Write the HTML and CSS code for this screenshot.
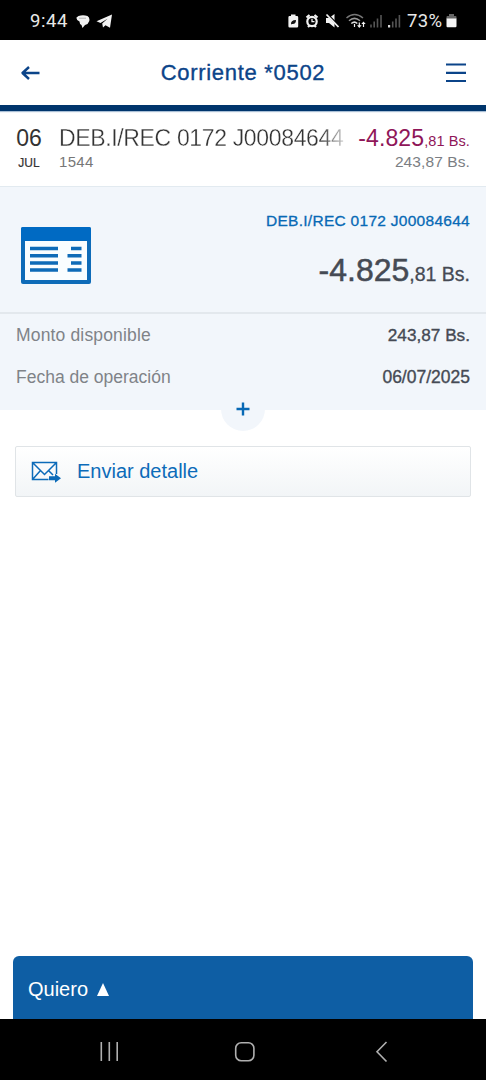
FILE: index.html
```html
<!DOCTYPE html>
<html lang="es">
<head>
<meta charset="utf-8">
<title>Corriente *0502</title>
<link rel="stylesheet" href="styles.css">
</head>
<body>
<div class="screen">
  <div class="status">
    <div class="status-left">
      <span class="clock">9:44</span>
      <svg class="ico-chat" width="14" height="14" viewBox="0 0 14 14"><path d="M2.500 1Q7-.5 11.500 1 14 2.500 13.300 6 12.500 9 9 10L6.500 13 5.500 10Q3.500 9.500 3.500 6.500 0 5 .5 2.500Z" fill="#f2f2f2"/><path d="M3 3.200H10" stroke="#999" stroke-width=".7"/></svg>
      <svg class="ico-plane" width="17" height="15" viewBox="0 0 17 15"><path d="M16 .5 14 13.800 9.500 11.300 7 13.500 6.200 9.500 11.500 4.800 4.500 9 .5 7.200Z" fill="#f2f2f2"/></svg>
    </div>
    <div class="status-right">
      <svg width="118" height="18" viewBox="287 13 118 18">
        <path d="M290 14.500h4.500v1.500h1.500q1.200 0 1.200 1.200v9q0 1.300-1.200 1.300h-7.400q-1.200 0-1.200-1.300v-9q0-1.200 1.200-1.200h1.400z" fill="#f2f2f2"/>
        <path d="M290 24.500q-.5-4.500 5-4.500 0 4.500-4 4" fill="#111"/>
        <circle cx="311" cy="21.500" r="4.700" fill="none" stroke="#f2f2f2" stroke-width="2.200"/>
        <path d="M305.500 17.500l3-2.500M316.500 17.500l-3-2.500M307 27l1.500-1.500M315 27l-1.500-1.500" stroke="#f2f2f2" stroke-width="2.200"/>
        <path d="M311 18.700v3h2.500" fill="none" stroke="#f2f2f2" stroke-width="1.300"/>
        <path d="M325 18h3l5.500-4v13.500l-5.500-4.500h-3z" fill="#f2f2f2"/>
        <path d="M326.500 14.500l12 12.500" stroke="#000" stroke-width="2.500"/>
        <path d="M325.500 14.500l12 12.500" stroke="#f2f2f2" stroke-width="1.800"/>
        <g fill="none" stroke-width="1.500">
          <path d="M345.500 18q8-7 16.500 0" stroke="#777"/>
          <path d="M348 20.800q5.500-4.800 11 0" stroke="#999"/>
          <path d="M350.300 23.500q3.200-2.700 6 0" stroke="#ddd"/>
        </g>
        <path d="M353.500 24v3M358.300 22.500v4M362.500 27v-4" stroke="#f2f2f2" stroke-width="1.200"/>
        <path d="M356 25.200h4.600L358.300 28zM360.300 24h4.400L362.500 21.400z" fill="#f2f2f2"/>
        <g stroke="#555" stroke-width="1.600"><path d="M370 27.500v-3M373.200 27.500v-6M376.500 27.500v-9M380 27.500V15M391.700 27.500v-6M395 27.500v-9M398.400 27.500V15"/></g>
        <path d="M387 25v2.500h2.200V25z" fill="#ddd"/>
      </svg>
      <span class="percent">73%</span>
      <svg class="ico-batt" width="11" height="14" viewBox="0 0 11 14"><path d="M3 0h5v2h1.500q1 0 1 1v2H.5V3q0-1 1-1H3z" fill="#666"/><path d="M.5 4.500h10v7.500q0 1.300-1 1.300h-8q-1 0-1-1.300z" fill="#f5f5f5"/></svg>
    </div>
  </div>

  <header class="topbar">
    <svg width="20" height="16" viewBox="0 0 20 16"><path d="M19.500 8H3M9 2 2.500 8 9 14" fill="none" stroke="#0b4489" stroke-width="2.400" stroke-linejoin="round"/></svg>
    <h1 class="title">Corriente *0502</h1>
    <svg width="20" height="20" viewBox="0 0 20 20"><path d="M0 1.500H20M0 9.800H20M0 18H20" stroke="#0b4489" stroke-width="2.200"/></svg>
  </header>

  <section class="movement">
    <div class="date"><span class="day">06</span><span class="month">JUL</span></div>
    <div class="concept"><span class="concept-name">DEB.I/REC 0172 J00084644</span><span class="ref">1544</span></div>
    <div class="amounts">
      <span class="debit">-4.825<span class="debit-cents">,81 Bs.</span></span>
      <span class="balance">243,87 Bs.</span>
    </div>
  </section>

  <section class="summary">
    <svg class="doc" width="70" height="57" viewBox="0 0 70 57"><rect width="70" height="57" rx="2" fill="#0e6bb8"/><rect width="70" height="14" rx="2" fill="#006ac3"/><path d="M4 14H66V53H4z" fill="#f9fdff"/><path d="M9 21.500H37M9 28.800H37M9 36H37M9 43H37M50 21.500H60.500M46.500 28.800H60.500M50 36H60.500M46.500 43H60.500" stroke="#0e6bb8" stroke-width="3.400"/></svg>
    <div class="summary-text">
      <span class="summary-name">DEB.I/REC 0172 J00084644</span>
      <span class="summary-amount">-4.825<span class="summary-cents">,81 Bs.</span></span>
    </div>
  </section>

  <section class="details">
    <div class="line"><span class="label label-amount">Monto disponible</span><span class="value value-money">243,87 Bs.</span></div>
    <div class="line"><span class="label">Fecha de operación</span><span class="value">06/07/2025</span></div>
    <div class="more"><svg width="14" height="14" viewBox="0 0 14 14"><path d="M.5 7H13.500M7 .5V13.500" stroke="#0869b5" stroke-width="2.400"/></svg></div>
  </section>

  <div class="send">
    <svg width="31" height="22" viewBox="0 0 31 22"><g fill="none" stroke="#0c6bb9" stroke-width="1.500"><path d="M17.500 18.600H1.500V1.500H25.500V13M1.500 1.500 13.500 13.500 25.500 1.500M1.500 18.600 9.500 9.500M17.500 9.500 22 14"/></g><path d="M18 15.200H24V12.800L30 17.300 24 21.700V19.200H18z" fill="#0c6bb9"/></svg>
    <span>Enviar detalle</span>
  </div>

  <div class="space"></div>

  <div class="quiero"><span>Quiero</span><svg width="12" height="13" viewBox="0 0 12 13"><path d="M6 0 12 13H0z" fill="#fff"/></svg></div>

  <nav class="navbar">
    <svg width="486" height="61" viewBox="0 1019 486 61"><g fill="none" stroke="#b0b0b0" stroke-width="1.600"><path d="M101.300 1042V1061M109.300 1042V1061M117.200 1042V1061"/><rect x="235.700" y="1042.700" width="18.200" height="18" rx="5.500"/><path d="M386.500 1042 377 1051.700 386.500 1061.500"/></g></svg>
  </nav>
</div>
</body>
</html>
```
FILE: styles.css
```css
* { box-sizing: border-box; }
body {
  margin: 0;
  background: #fff;
  font-family: "Liberation Sans", Arial, sans-serif;
}
.screen {
  display: flex;
  flex-direction: column;
  width: 486px;
  height: 1080px;
  overflow: hidden;
}
.screen span, .screen h1 { white-space: nowrap; }
svg { display: block; flex: none; }

.status {
  display: flex;
  justify-content: space-between;
  height: 40px;
  padding: 0 29px 0 30px;
  background: #000;
  color: #e8e8e8;
  font-family: Roboto, sans-serif;
  font-size: 18.5px;
  line-height: 43px;
}
.status-left, .status-right { display: flex; }
.clock { width: 46px; letter-spacing: 0.6px; }
.ico-chat { margin-top: 15px; }
.ico-plane { margin: 14px 0 0 6px; }
.status-right > svg:first-child { margin-top: 13px; }
.percent { width: 39px; margin-left: 1px; letter-spacing: 0.3px; }
.ico-batt { margin-top: 14px; }

.topbar {
  display: flex;
  align-items: center;
  justify-content: space-between;
  height: 71px;
  padding: 0 20px;
  border-bottom: 6px solid #00356c;
  box-shadow: 0 1px 1px #a9bfd5;
  color: #0b4489;
}
.title {
  margin: 0;
  font-size: 22px;
  font-weight: 400;
  letter-spacing: 0.7px;
  -webkit-text-stroke: 0.35px #0b4489;
}

.movement {
  display: flex;
  height: 76px;
  padding: 14px 16px 0 15px;
  border-bottom: 1px solid #e2eaf0;
  color: #333;
}
.movement > div { display: flex; flex-direction: column; }
.date { width: 28px; align-items: center; }
.day { font-size: 23px; line-height: 27px; color: #333; }
.month { font-size: 12px; line-height: 23px; -webkit-text-stroke: 0.2px #333; }
.concept { width: 287px; margin-left: 16px; }
.concept-name {
  font-size: 23px;
  line-height: 27px;
  letter-spacing: -0.35px;
  -webkit-text-stroke: 0.3px #fff;
  -webkit-mask-image: linear-gradient(90deg, #000 262px, transparent 292px);
  mask-image: linear-gradient(90deg, #000 262px, transparent 292px);
}
.ref { font-size: 15px; line-height: 20px; letter-spacing: 0.3px; color: #777; }
.amounts { flex: 1; align-items: flex-end; }
.debit { height: 27px; font-size: 23px; line-height: 27px; letter-spacing: 0.1px; color: #8f1659; }
.debit-cents { font-size: 14.5px; }
.balance { font-size: 15.5px; line-height: 20px; letter-spacing: 0.1px; color: #7b7e83; }

.summary {
  display: flex;
  justify-content: space-between;
  height: 127px;
  padding: 24px 16px 0 21px;
  background: #f2f6fb;
  border-bottom: 2px solid #e3e8ed;
}
.doc { margin-top: 16px; }
.summary-text { display: flex; flex-direction: column; align-items: flex-end; }
.summary-name { font-size: 15.5px; line-height: 20px; letter-spacing: 0.28px; color: #0869b5; -webkit-text-stroke: 0.3px #0869b5; }
.summary-amount { margin-top: 19px; font-size: 32px; line-height: 40px; color: #454a54; -webkit-text-stroke: 0.5px #454a54; }
.summary-cents { font-size: 19.5px; -webkit-text-stroke-width: 0.3px; }

.details {
  position: relative;
  height: 96px;
  padding: 0 16px;
  background: #f2f6fb;
}
.line { display: flex; justify-content: space-between; height: 42px; font-size: 17.5px; line-height: 43px; }
.label { color: #7f8388; }
.label-amount { letter-spacing: 0.16px; }
.value { color: #454a54; -webkit-text-stroke: 0.35px #454a54; }
.value-money { font-size: 17.2px; }
.more {
  position: absolute;
  left: 221px;
  bottom: -21px;
  display: flex;
  align-items: center;
  justify-content: center;
  width: 44px;
  height: 44px;
  border-radius: 50%;
  background: #f2f6fb;
}

.send {
  display: flex;
  align-items: center;
  gap: 15px;
  height: 51px;
  margin: 36px 15px 0;
  padding-left: 15px;
  border: 1px solid #e0e4e7;
  border-radius: 2px;
  background: linear-gradient(#fff, #f2f5f7);
  color: #0c6bb9;
  font-size: 20px;
}
.space { flex: 1; }
.quiero {
  display: flex;
  align-items: center;
  gap: 9px;
  height: 63px;
  margin: 0 13px;
  padding: 3px 16px 0 15px;
  border-radius: 6px 6px 0 0;
  background: #0e5ea4;
  color: #fff;
  font-size: 20px;
}
.navbar { height: 61px; background: #000; }
```
